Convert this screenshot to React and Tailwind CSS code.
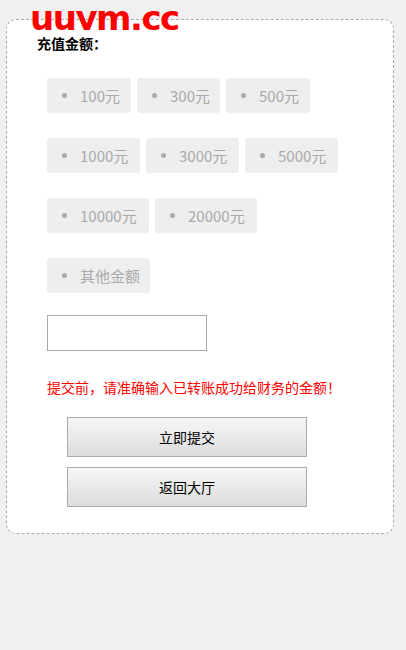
import React, { useState } from 'react';

const ROWS = [
    [
        { label: '100元', w: 'w-[84px]' },
        { label: '300元', w: 'w-[83px]' },
        { label: '500元', w: 'w-[84px]' },
    ],
    [
        { label: '1000元', w: 'w-[93px]' },
        { label: '3000元', w: 'w-[93px]' },
        { label: '5000元', w: 'w-[93px]' },
    ],
    [
        { label: '10000元', w: 'w-[102px]' },
        { label: '20000元', w: 'w-[102px]' },
    ],
    [
        { label: '其他金额', w: 'w-[103px]' },
    ],
];

const App = () => {
    const [valor, setValor] = useState('');

    return (
        <div className="relative min-h-[650px] bg-[#f0f0f0] pt-[19px] font-['Noto_Sans_CJK_SC','Microsoft_YaHei',sans-serif]">
            {/* marca d'água */}
            <div className="absolute left-[30px] top-0 h-[30px] overflow-hidden">
                <div className="mt-[4px] font-['DejaVu_Sans',sans-serif] font-bold text-[34px] leading-[28px] tracking-[-1.5px] text-[#ff0000]">
                    uuym.cc
                </div>
            </div>

            <div className="ml-[6px] w-[388px] bg-white border border-dashed border-[#aaaaaa] rounded-[10px] pt-[13px] pb-[26px] pl-[30px]">
                <div className="text-[14px] leading-[20px] font-bold text-black">充值金额：</div>

                <div className="pl-[10px]">
                    {ROWS.map((row, i) => (
                        <div key={i} className="flex gap-[6px] mt-[25px]">
                            {row.map((b) => (
                                <div
                                    key={b.label}
                                    className={`${b.w} h-[35px] rounded-[3px] bg-[#eeeeee] flex items-center pl-[15px] text-[15px] leading-[20px] text-[#aaaaaa] cursor-pointer`}
                                >
                                    <span className="w-[5px] h-[5px] rounded-full bg-[#aaaaaa] mr-[13px] shrink-0"></span>
                                    <span className="whitespace-nowrap">{b.label}</span>
                                </div>
                            ))}
                        </div>
                    ))}

                    <input
                        value={valor}
                        onChange={(e) => setValor(e.target.value)}
                        className="block mt-[22px] w-[160px] h-[36px] border border-[#aaaaaa] bg-white outline-none px-2 text-[14px]"
                    />

                    <p className="mt-[26px] text-[14px] leading-[20px] text-[#ff0000]">
                        提交前，请准确输入已转账成功给财务的金额！
                    </p>

                    <div className="ml-[20px] mt-[20px] flex flex-col gap-[10px]">
                        <button className="w-[240px] h-[40px] border border-[#aaaaaa] bg-gradient-to-b from-[#f7f7f7] to-[#dcdcdc] text-[14px] text-black">
                            立即提交
                        </button>
                        <button className="w-[240px] h-[40px] border border-[#aaaaaa] bg-gradient-to-b from-[#f7f7f7] to-[#dcdcdc] text-[14px] text-black">
                            返回大厅
                        </button>
                    </div>
                </div>
            </div>
        </div>
    );
};

export default App;
